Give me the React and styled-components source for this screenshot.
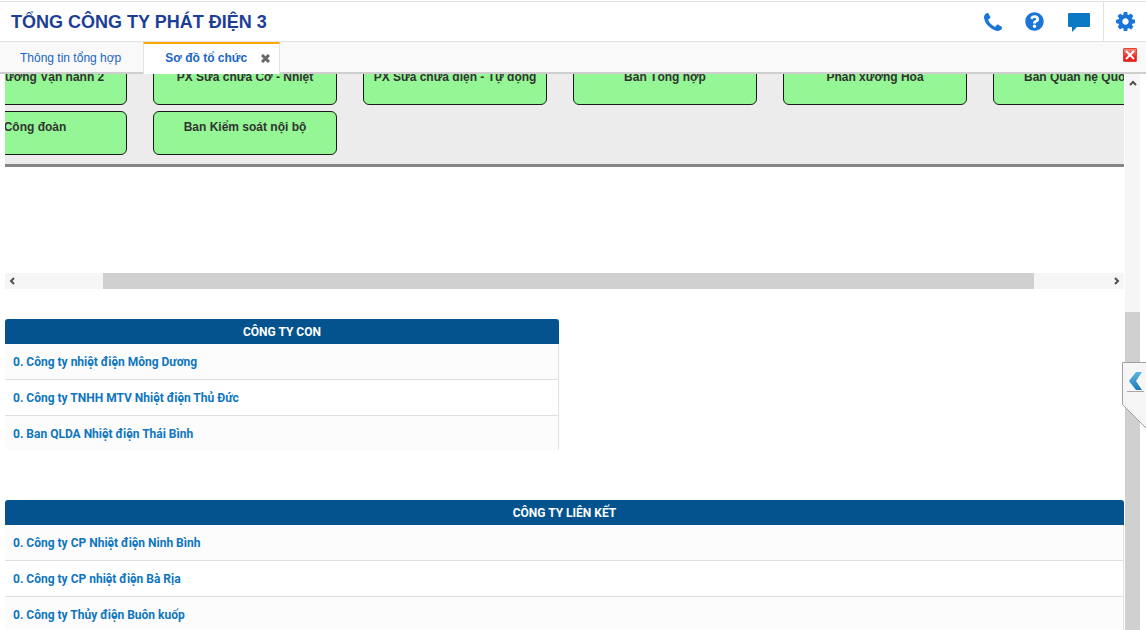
import React from 'react';
import styled, { createGlobalStyle } from 'styled-components';
import { FaQuestionCircle } from 'react-icons/fa';

const GlobalStyle = createGlobalStyle`
	* {
		box-sizing: border-box;
	}

	body {
		margin: 0;
		background: #fff;
		color: #333;
		font-family: 'Liberation Sans', Arial, sans-serif;
		font-size: 12px;
		line-height: 16px;
	}
`;

const Page = styled.div`
	display: flex;
	flex-direction: column;
	height: 100vh;
	overflow: hidden;
	position: relative;
`;

const Header = styled.header`
	display: flex;
	justify-content: space-between;
	flex: none;
	height: 41px;
	margin-top: 1px;
	border-top: 1px solid #e2e2e2;
	border-bottom: 1px solid #e2e2e2;
`;

const Title = styled.h1`
	margin: 0;
	padding-left: 11px;
	color: #1c3f95;
	font-size: 18px;
	line-height: 41px;
`;

const Actions = styled.div`
	display: flex;
`;

const IconButton = styled.button`
	display: flex;
	align-items: center;
	justify-content: center;
	width: ${props => props.$width}px;
	padding: 0;
	border: 0;
	border-left: 1px solid ${props => (props.$divided ? '#e2e2e2' : 'transparent')};
	background: none;
	color: #1a75d8;
	cursor: pointer;
`;

const TabBar = styled.nav`
	display: flex;
	flex: none;
	height: 32px;
	padding-right: 9px;
	background: #f9f9f9;
	box-shadow: inset 0 -2px #cfcfcf;
`;

const Tab = styled.div`
	display: flex;
	align-items: center;
	padding: 0 22px 0 20px;
`;

const ActiveTab = styled(Tab)`
	gap: 14px;
	padding: 0 9px 2px 21px;
	border: 1px solid #e2e2e2;
	border-top: 2px solid #ffa800;
	border-bottom: 0;
	background: #fff;
`;

const TabLink = styled.a`
	color: #1a66c4;
	font-weight: ${props => (props.$active ? 'bold' : 'normal')};
	text-decoration: none;
`;

const PlainButton = styled.button`
	display: flex;
	align-items: center;
	padding: 0;
	border: 0;
	background: none;
	cursor: pointer;
`;

const CloseAll = styled(PlainButton)`
	justify-content: center;
	width: 14px;
	height: 14px;
	margin-top: 6px;
	margin-left: auto;
	border: 1px solid #e0453c;
	border-radius: 1px;
	background: linear-gradient(#f58a78, #ee1c1c 70%);
`;

const Body = styled.div`
	display: flex;
	flex: 1;
	min-height: 0;
	padding-right: 6px;
`;

const Content = styled.main`
	flex: 1;
	min-width: 0;
	overflow: hidden;
	padding: 0 1px 0 5px;
`;

const Chart = styled.section`
	height: 199px;
	overflow: hidden;
`;

const ChartPanel = styled.div`
	width: max-content;
	min-width: 100%;
	margin-top: -13px;
	padding-bottom: 9px;
	border-bottom: 3px solid #858585;
	background: #ececec;
`;

const Nodes = styled.div`
	display: grid;
	grid-template-columns: repeat(6, 184px);
	gap: 6px 26px;
	margin-left: -62px;
`;

const Node = styled.div`
	height: 44px;
	padding-top: 7px;
	border: 1px solid #1a1a1a;
	border-radius: 6px;
	background: #94f694;
	font-weight: bold;
	text-align: center;
	white-space: nowrap;
`;

const HScroll = styled.div`
	display: flex;
	height: 16px;
	background: #f6f6f6;
`;

const VScroll = styled.div`
	display: flex;
	flex-direction: column;
	flex: none;
	width: 15px;
	background: #f6f6f6;
`;

const ScrollButton = styled(PlainButton)`
	justify-content: center;
	flex: none;
	width: 16px;
	height: 16px;
	color: #505050;
`;

const HTrack = styled.div`
	display: flex;
	flex: 1;
	padding-left: 82px;
	padding-right: 74px;
`;

const VTrack = styled.div`
	display: flex;
	flex: 1;
	padding-top: 222px;
`;

const Thumb = styled.div`
	flex: 1;
	background: #d0d0d0;
`;

const CompanyTable = styled.table`
	width: ${props => (props.$half ? '49.5%' : '100%')};
	margin-top: ${props => (props.$half ? 30 : 50)}px;
	border-spacing: 0;
	font-family: Roboto, 'Liberation Sans', sans-serif;
`;

const HeadCell = styled.th`
	height: 25px;
	padding: 0;
	border-radius: 3px 3px 0 0;
	background: #04538f;
	color: #fff;
	font-weight: bold;
`;

const Cell = styled.td`
	height: 36px;
	padding: 1px 8px 0;
	border-right: 1px solid #e0e0e0;
	border-bottom: 1px solid #e0e0e0;

	tr:nth-child(odd) > & {
		background: #fcfcfc;
	}

	tr:last-child > & {
		height: 34px;
		border-bottom: 0;
	}
`;

const CompanyLink = styled.a`
	color: #0e76bf;
	font-weight: bold;
	text-decoration: none;
`;

const Drawer = styled(PlainButton)`
	position: absolute;
	top: 362px;
	right: 0;
`;

const row1 = [
  'Phân xưởng Vận hành 2',
  'PX Sửa chữa Cơ - Nhiệt',
  'PX Sửa chữa điện - Tự động',
  'Ban Tổng hợp',
  'Phân xưởng Hóa',
  'Ban Quan hệ Quốc tế',
];

const row2 = ['Công đoàn', 'Ban Kiểm soát nội bộ'];

const subsidiaries = [
  'Công ty nhiệt điện Mông Dương',
  'Công ty TNHH MTV Nhiệt điện Thủ Đức',
  'Ban QLDA Nhiệt điện Thái Bình',
];

const affiliates = [
  'Công ty CP Nhiệt điện Ninh Bình',
  'Công ty CP nhiệt điện Bà Rịa',
  'Công ty Thủy điện Buôn kuốp',
];

const PhoneIcon = () => (
  <svg width="18" height="18" viewBox="0 0 1408 1408" fill="currentColor">
    <path d="M1408 1112q0 27-10 70.500t-21 68.500q-21 50-122 106-94 51-186 51-27 0-53-3.500t-57.500-12.500-47-14.500-55.500-20.500-49-18q-98-35-175-83-127-79-264-216t-216-264q-48-77-83-175-3-9-18-49t-20.500-55.500-14.500-47-12.500-57.500-3.500-53q0-92 51-186 56-101 106-122 25-11 68.500-21t70.500-10q14 0 21 3 18 6 53 76 11 19 30 54t35 63.500 31 53.500q3 4 17.500 25t21.500 35.500 7 28.500q0 20-28.500 50t-62 55-62 53-28.500 46q0 9 5 22.500t8.500 20.500 14 24 11.500 19q76 137 174 235t235 174q2 1 19 11.500t24 14 20.500 8.500 22.500 5q18 0 46-28.500t53-62 55-62 50-28.500q14 0 28.500 7t35.500 21.500 25 17.500q25 15 53.500 31t63.500 35 54 30q70 35 76 53 3 7 3 21z" />
  </svg>
);

const CogIcon = () => (
  <svg width="19" height="19" viewBox="0 0 1536 1536" fill="currentColor">
    <path d="M1024 768q0-106-75-181t-181-75-181 75-75 181 75 181 181 75 181-75 75-181zm512-109v222q0 12-8 23t-20 13l-185 28q-19 54-39 91 35 50 107 138 10 12 10 25t-9 23q-27 37-99 108t-94 71q-12 0-26-9l-138-108q-44 23-91 38-16 136-29 186-7 28-36 28h-222q-14 0-24.500-8.500t-11.500-21.500l-28-184q-49-16-90-37l-141 107q-10 9-25 9-14 0-25-11-126-114-165-168-7-10-7-23 0-12 8-23 15-21 51-66.500t54-70.500q-27-50-41-99l-183-27q-13-2-21-12.500t-8-23.500v-222q0-12 8-23t19-13l186-28q14-46 39-92-40-57-107-138-10-12-10-24 0-10 9-23 26-36 98.500-107.500t94.500-71.500q13 0 26 10l138 107q44-23 91-38 16-136 29-186 7-28 36-28h222q14 0 24.500 8.500t11.500 21.500l28 184q49 16 90 37l142-107q9-9 24-9 13 0 25 10 129 119 165 170 7 8 7 22 0 12-8 23-15 21-51 66.500t-54 70.500q26 50 41 98l183 28q13 2 21 12.500t8 23.500z" />
  </svg>
);

const Arrow = ({ d }) => (
  <svg width="10" height="10" viewBox="0 0 10 10" fill="none" stroke="currentColor" strokeWidth="2">
    <path d={d} />
  </svg>
);

const Companies = ({ title, items, half }) => (
  <CompanyTable $half={half}>
    <thead>
      <tr>
        <HeadCell scope="col">{title}</HeadCell>
      </tr>
    </thead>
    <tbody>
      {items.map(item => (
        <tr key={item}>
          <Cell>
            <CompanyLink href="#">0. {item}</CompanyLink>
          </Cell>
        </tr>
      ))}
    </tbody>
  </CompanyTable>
);

function App() {
  return (
    <Page>
      <GlobalStyle />
      <Header>
        <Title>TỔNG CÔNG TY PHÁT ĐIỆN 3</Title>
        <Actions>
          <IconButton aria-label="Điện thoại" $width={43}><PhoneIcon /></IconButton>
          <IconButton aria-label="Trợ giúp" $width={39}><FaQuestionCircle size={19} /></IconButton>
          <IconButton aria-label="Tin nhắn" $width={50}>
            <svg width="22" height="20" viewBox="0 0 22 20" fill="#0b78c4">
              <path d="M1 1H21Q22 1 22 2V14Q22 15 21 15H9L4 20V15H1Q0 15 0 14V2Q0 1 1 1Z" />
            </svg>
          </IconButton>
          <IconButton aria-label="Cài đặt" $width={43} $divided><CogIcon /></IconButton>
        </Actions>
      </Header>
      <TabBar>
        <Tab><TabLink href="#">Thông tin tổng hợp</TabLink></Tab>
        <ActiveTab>
          <TabLink href="#" $active>Sơ đồ tổ chức</TabLink>
          <PlainButton aria-label="Đóng">
            <svg width="9" height="9" viewBox="0 0 9 9" stroke="#686868" strokeWidth="3">
              <path d="M1 1L8 8M8 1L1 8" />
            </svg>
          </PlainButton>
        </ActiveTab>
        <CloseAll aria-label="Đóng tất cả">
          <svg width="10" height="10" viewBox="0 0 10 10" stroke="#fff" strokeWidth="2">
            <path d="M1 1L9 9M9 1L1 9" />
          </svg>
        </CloseAll>
      </TabBar>
      <Body>
        <Content>
          <Chart>
            <ChartPanel>
              <Nodes>
                {row1.concat(row2).map(name => <Node key={name}>{name}</Node>)}
              </Nodes>
            </ChartPanel>
          </Chart>
          <HScroll>
            <ScrollButton aria-label="Cuộn trái"><Arrow d="M6 2L3 5L6 8" /></ScrollButton>
            <HTrack><Thumb /></HTrack>
            <ScrollButton aria-label="Cuộn phải"><Arrow d="M4 2L7 5L4 8" /></ScrollButton>
          </HScroll>
          <Companies title="CÔNG TY CON" items={subsidiaries} half />
          <Companies title="CÔNG TY LIÊN KẾT" items={affiliates} />
        </Content>
        <VScroll>
          <ScrollButton aria-label="Cuộn lên"><Arrow d="M2 8L5 5L8 8" /></ScrollButton>
          <VTrack><Thumb /></VTrack>
        </VScroll>
      </Body>
      <Drawer aria-label="Mở bảng bên">
        <svg width="24" height="68" viewBox="0 0 24 68">
          <defs>
            <linearGradient id="chevron" x1="0" y1="0" x2="0" y2="1">
              <stop offset="0" stopColor="#5db4e4" />
              <stop offset="1" stopColor="#1f7db5" />
            </linearGradient>
          </defs>
          <path d="M24 0.5H0.5V42.500L24 66" fill="#f6f6f6" stroke="#a0a0a0" />
          <path d="M5 29.500H22" stroke="#a8a8a8" />
          <path d="M14 10H20L14 19L20 28H14L7 19Z" fill="url(#chevron)" />
        </svg>
      </Drawer>
    </Page>
  );
}

export default App;
